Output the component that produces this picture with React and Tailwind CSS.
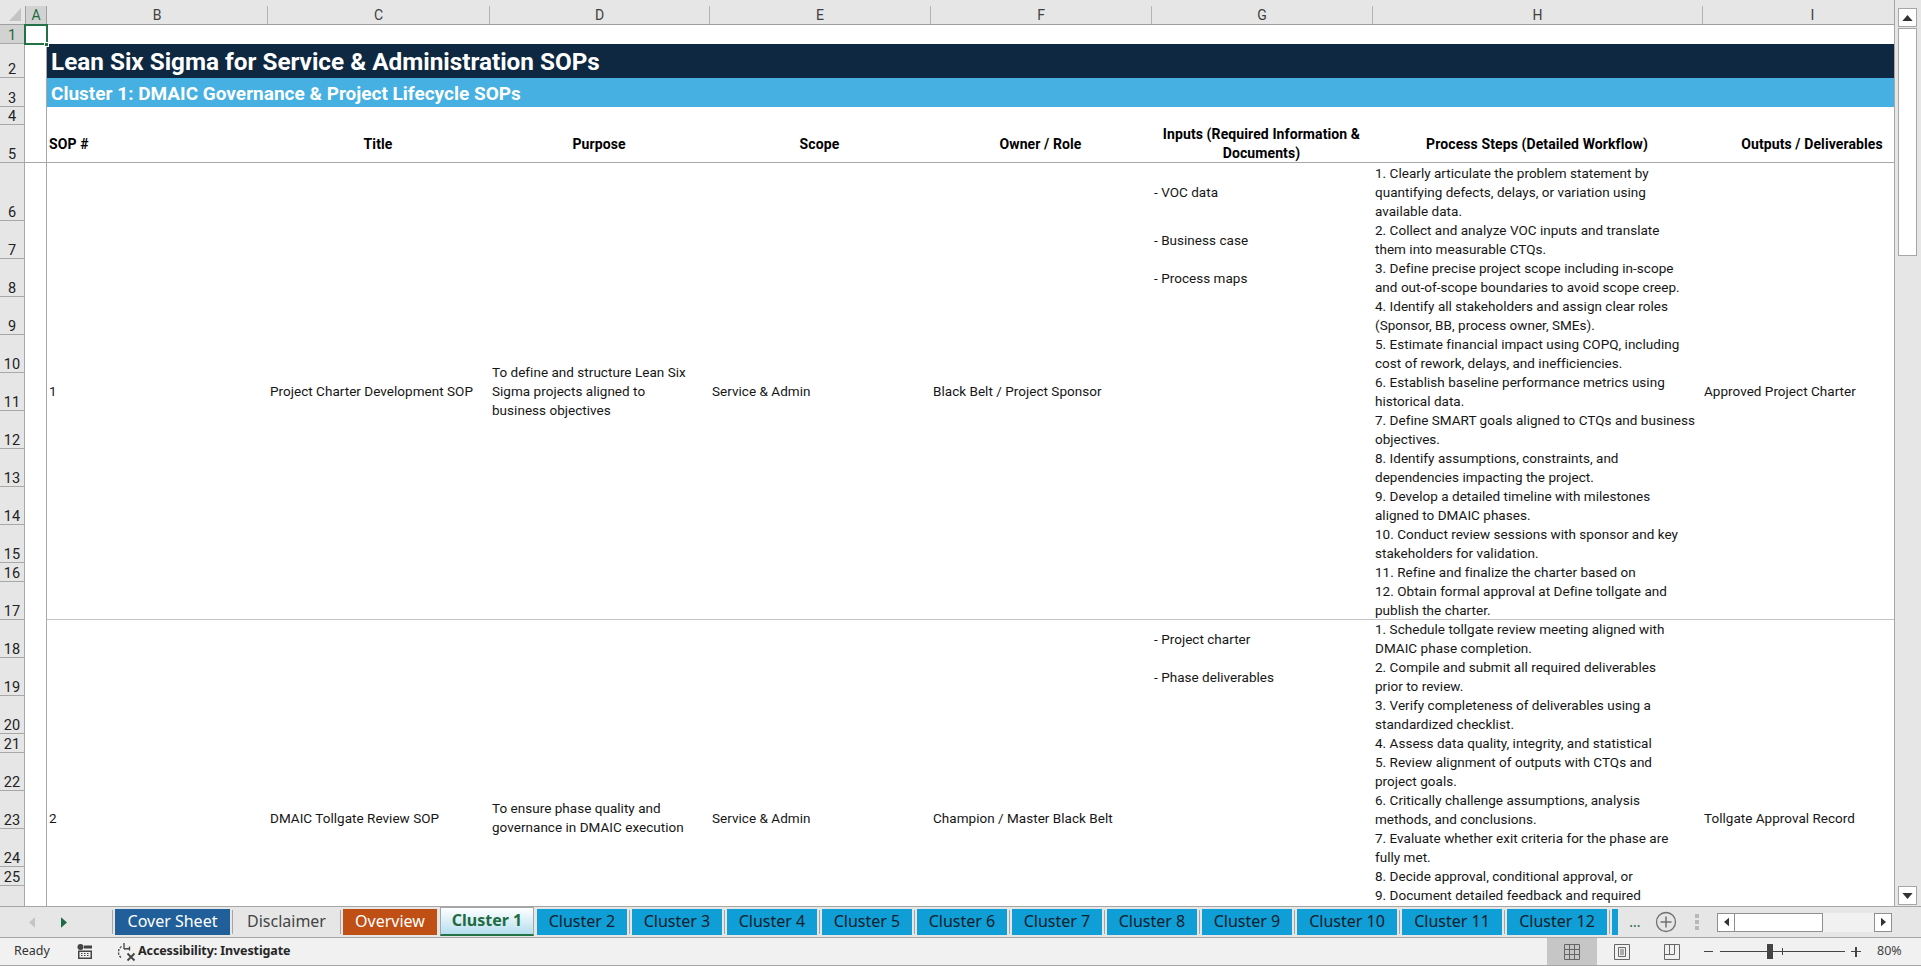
const cellFont = "font-['Roboto',sans-serif]";

const columns = [
  { name: "B", w: "w-[221px]" },
  { name: "C", w: "w-[222px]" },
  { name: "D", w: "w-[220px]" },
  { name: "E", w: "w-[221px]" },
  { name: "F", w: "w-[221px]" },
  { name: "G", w: "w-[221px]" },
  { name: "H", w: "w-[330px]" },
  { name: "I", w: "w-[220px]" },
];

const rowHeads = [
  { n: 1, h: "h-[19px]", active: true },
  { n: 2, h: "h-[34px]" },
  { n: 3, h: "h-[29px]" },
  { n: 4, h: "h-[18px]" },
  { n: 5, h: "h-[38px]" },
  { n: 6, h: "h-[58px]" },
  { n: 7, h: "h-[38px]" },
  { n: 8, h: "h-[38px]" },
  { n: 9, h: "h-[38px]" },
  { n: 10, h: "h-[38px]" },
  { n: 11, h: "h-[38px]" },
  { n: 12, h: "h-[38px]" },
  { n: 13, h: "h-[38px]" },
  { n: 14, h: "h-[38px]" },
  { n: 15, h: "h-[38px]" },
  { n: 16, h: "h-[19px]" },
  { n: 17, h: "h-[38px]" },
  { n: 18, h: "h-[38px]" },
  { n: 19, h: "h-[38px]" },
  { n: 20, h: "h-[38px]" },
  { n: 21, h: "h-[19px]" },
  { n: 22, h: "h-[38px]" },
  { n: 23, h: "h-[38px]" },
  { n: 24, h: "h-[38px]" },
  { n: 25, h: "h-[19px]" },
  { n: "", h: "h-[38px]" },
];

const sops = [
  {
    id: "1",
    title: "Project Charter Development SOP",
    purpose: "To define and structure Lean Six\nSigma projects aligned to\nbusiness objectives",
    scope: "Service & Admin",
    owner: "Black Belt / Project Sponsor",
    output: "Approved Project Charter",
    border: "border-b border-[#c4c4c4]",
    rows: [
      ["- VOC data", "1. Clearly articulate the problem statement by\nquantifying defects, delays, or variation using\navailable data.", "h-[58px]"],
      ["- Business case", "2. Collect and analyze VOC inputs and translate\nthem into measurable CTQs.", "h-[38px]"],
      ["- Process maps", "3. Define precise project scope including in-scope\nand out-of-scope boundaries to avoid scope creep.", "h-[38px]"],
      ["", "4. Identify all stakeholders and assign clear roles\n(Sponsor, BB, process owner, SMEs).", "h-[38px]"],
      ["", "5. Estimate financial impact using COPQ, including\ncost of rework, delays, and inefficiencies.", "h-[38px]"],
      ["", "6. Establish baseline performance metrics using\nhistorical data.", "h-[38px]"],
      ["", "7. Define SMART goals aligned to CTQs and business\nobjectives.", "h-[38px]"],
      ["", "8. Identify assumptions, constraints, and\ndependencies impacting the project.", "h-[38px]"],
      ["", "9. Develop a detailed timeline with milestones\naligned to DMAIC phases.", "h-[38px]"],
      ["", "10. Conduct review sessions with sponsor and key\nstakeholders for validation.", "h-[38px]"],
      ["", "11. Refine and finalize the charter based on", "h-[19px]"],
      ["", "12. Obtain formal approval at Define tollgate and\npublish the charter.", "h-[38px]"],
    ],
  },
  {
    id: "2",
    title: "DMAIC Tollgate Review SOP",
    purpose: "To ensure phase quality and\ngovernance in DMAIC execution",
    scope: "Service & Admin",
    owner: "Champion / Master Black Belt",
    output: "Tollgate Approval Record",
    border: "",
    rows: [
      ["- Project charter", "1. Schedule tollgate review meeting aligned with\nDMAIC phase completion.", "h-[38px]"],
      ["- Phase deliverables", "2. Compile and submit all required deliverables\nprior to review.", "h-[38px]"],
      ["", "3. Verify completeness of deliverables using a\nstandardized checklist.", "h-[38px]"],
      ["", "4. Assess data quality, integrity, and statistical", "h-[19px]"],
      ["", "5. Review alignment of outputs with CTQs and\nproject goals.", "h-[38px]"],
      ["", "6. Critically challenge assumptions, analysis\nmethods, and conclusions.", "h-[38px]"],
      ["", "7. Evaluate whether exit criteria for the phase are\nfully met.", "h-[38px]"],
      ["", "8. Decide approval, conditional approval, or", "h-[19px]"],
      ["", "9. Document detailed feedback and required\n\u00a0", "h-[38px]"],
      ["", "", "h-[92px]"],
    ],
  },
];

const tabs = [
  { label: "Cover Sheet", cls: "w-[115px] h-[26px] bg-[#215f9a] text-white" },
  { label: "Disclaimer", cls: "w-[103px] h-[26px] text-[#444444]" },
  { label: "Overview", cls: "w-[94px] h-[26px] bg-[#bf4f14] text-white" },
  {
    label: "Cluster 1",
    cls: "w-[94px] h-[29px] self-start border-x border-t border-[#a6a6a6] border-b-2 border-b-[#217346] bg-gradient-to-b from-white to-[#b5deef] font-bold text-[#1e6b41]",
  },
  { label: "Cluster 2", cls: "w-[90px] h-[26px] bg-[#0f9ed5] text-[#10202c]" },
  { label: "Cluster 3", cls: "w-[90px] h-[26px] bg-[#0f9ed5] text-[#10202c]" },
  { label: "Cluster 4", cls: "w-[90px] h-[26px] bg-[#0f9ed5] text-[#10202c]" },
  { label: "Cluster 5", cls: "w-[90px] h-[26px] bg-[#0f9ed5] text-[#10202c]" },
  { label: "Cluster 6", cls: "w-[90px] h-[26px] bg-[#0f9ed5] text-[#10202c]" },
  { label: "Cluster 7", cls: "w-[90px] h-[26px] bg-[#0f9ed5] text-[#10202c]" },
  { label: "Cluster 8", cls: "w-[90px] h-[26px] bg-[#0f9ed5] text-[#10202c]" },
  { label: "Cluster 9", cls: "w-[90px] h-[26px] bg-[#0f9ed5] text-[#10202c]" },
  { label: "Cluster 10", cls: "w-[100px] h-[26px] bg-[#0f9ed5] text-[#10202c]" },
  { label: "Cluster 11", cls: "w-[100px] h-[26px] bg-[#0f9ed5] text-[#10202c]" },
  { label: "Cluster 12", cls: "w-[100px] h-[26px] bg-[#0f9ed5] text-[#10202c]" },
  { label: "", cls: "w-[6px] h-[26px] bg-[#0f9ed5]" },
];

function Triangle({ dir, className }) {
  const points = {
    up: "0,7 12,7 6,0",
    down: "0,0 12,0 6,7",
    left: "7,0 7,12 0,6",
    right: "0,0 0,12 7,6",
  };
  const box = dir === "up" || dir === "down" ? "0 0 12 7" : "0 0 7 12";
  return (
    <svg viewBox={box} className={className} fill="currentColor">
      <polygon points={points[dir]} />
    </svg>
  );
}

function ColumnHeaders() {
  return (
    <div className={`flex h-[25px] shrink-0 pt-[6px] text-[14px] text-[#3f3f3f] ${cellFont}`}>
      <div className="flex w-[25px] shrink-0 items-end justify-end border-b border-[#9f9f9f] pb-[3px] pr-[4px]">
        <svg viewBox="0 0 12 13" className="h-[13px] w-[12px]">
          <polygon points="12,0 12,13 0,13" fill="#c4c4c4" />
        </svg>
      </div>
      <div className="flex w-[22px] shrink-0 items-center justify-center border-x border-b border-[#9f9f9f] bg-[#d2d2d2] text-[#1e6b41]">
        A
      </div>
      <div className="flex min-w-0 flex-1 overflow-hidden border-b border-[#9f9f9f]">
        {columns.map((col) => (
          <div
            key={col.name}
            className={`flex shrink-0 items-center justify-center border-r border-[#b4b4b4] ${col.w}`}
          >
            {col.name}
          </div>
        ))}
      </div>
    </div>
  );
}

function RowHeaders() {
  return (
    <div className={`flex shrink-0 flex-col text-[14.5px] text-[#222222] ${cellFont}`}>
      {rowHeads.map((row, i) => (
        <div key={i} className={`flex shrink-0 ${row.h}`}>
          <div
            className={`flex w-[25px] items-end justify-center border-r border-b border-[#a8a8a8] leading-[15px] ${
              row.active ? "bg-[#d2d2d2] text-[#1e6b41]" : "bg-[#e6e6e6]"
            }`}
          >
            {row.n}
          </div>
          <div
            className={`w-[22px] border-r border-[#a8a8a8] bg-white ${
              row.n === 5 ? "border-b" : ""
            }`}
          />
        </div>
      ))}
    </div>
  );
}

function SopBlock({ sop }) {
  const span = sop.rows.length === 12 ? "row-span-12" : "row-span-10";
  const merged = `${span} flex items-center whitespace-pre-line px-[2px] ${sop.border}`;
  return (
    <div className="grid grid-cols-[221px_222px_220px_221px_221px_221px_329px_220px]">
      <div className={merged}>{sop.id}</div>
      <div className={merged}>{sop.title}</div>
      <div className={merged}>{sop.purpose}</div>
      <div className={merged}>{sop.scope}</div>
      <div className={merged}>{sop.owner}</div>
      {sop.rows.map(([input, step, height], i) => (
        <Row
          key={i}
          input={input}
          step={step}
          height={height}
          first={i === 0}
          last={i === sop.rows.length - 1 && sop.rows.length === 12}
          sop={sop}
          merged={merged}
        />
      ))}
    </div>
  );
}

function Row({ input, step, height, first, last, sop, merged }) {
  const edge = last ? "border-b border-[#c4c4c4]" : "";
  return (
    <>
      <div className={`flex items-center px-[2px] ${edge}`}>{input}</div>
      <div className={`flex items-center whitespace-pre-line px-[2px] ${height} ${edge}`}>
        {step}
      </div>
      {first && <div className={merged}>{sop.output}</div>}
    </>
  );
}

function Sheet() {
  return (
    <div className={`min-w-0 flex-1 overflow-hidden bg-white text-[13.5px] leading-[19px] tracking-[0.03px] text-[#161616] ${cellFont}`}>
      <div className="h-[19px]" />
      <div className="flex h-[34px] items-center bg-[#0e2841] pt-[1px] pl-[4px] text-[24.3px] font-bold tracking-normal text-white">
        Lean Six Sigma for Service &amp; Administration SOPs
      </div>
      <div className="flex h-[29px] items-center bg-[#45b0e1] pt-[2px] pl-[4px] text-[19px] font-bold tracking-normal text-white">
        Cluster 1: DMAIC Governance &amp; Project Lifecycle SOPs
      </div>
      <div className="h-[18px]" />
      <div className="grid h-[38px] grid-cols-[220px_222px_220px_221px_221px_221px_330px_220px] items-center border-b border-[#a8a8a8] text-[14px] font-bold tracking-[0.1px] text-black">
        <div className="pl-[2px]">SOP #</div>
        <div className="text-center">Title</div>
        <div className="text-center">Purpose</div>
        <div className="text-center">Scope</div>
        <div className="text-center">Owner / Role</div>
        <div className="text-center">
          Inputs (Required Information &amp;
          <br />
          Documents)
        </div>
        <div className="text-center">Process Steps (Detailed Workflow)</div>
        <div className="text-center">Outputs / Deliverables</div>
      </div>
      {sops.map((sop) => (
        <SopBlock key={sop.id} sop={sop} />
      ))}
    </div>
  );
}

function VerticalScroll() {
  return (
    <div className="flex w-[26px] shrink-0 flex-col items-start bg-[#e6e6e6] pt-[8px] pl-[3px] text-[#333333]">
      <div className="flex h-[19px] w-[19px] shrink-0 items-center justify-center border border-[#a6a6a6] bg-white">
        <Triangle dir="up" className="h-[6px] w-[11px]" />
      </div>
      <div className="mt-px h-[228px] w-[19px] shrink-0 border border-[#a6a6a6] bg-white" />
      <div className="flex-1" />
      <div className="flex h-[19px] w-[19px] shrink-0 items-center justify-center border border-[#a6a6a6] bg-white">
        <Triangle dir="down" className="h-[6px] w-[11px]" />
      </div>
      <div className="h-px" />
    </div>
  );
}

function TabBar() {
  return (
    <div className="flex h-[32px] shrink-0 items-center border-y border-y-[#a6a6a6] bg-[#e6e6e6] font-['Noto_Sans',sans-serif] text-[16px]">
      <div className="flex w-[112px] shrink-0 items-center pl-[29px]">
        <Triangle dir="left" className="h-[11px] w-[6px] text-[#c4c4c4]" />
        <Triangle dir="right" className="ml-[26px] h-[11px] w-[6px] text-[#1e6b41]" />
      </div>
      <div className="flex h-[30px] shrink-0 items-center">
        <div className="mr-[2px] h-[24px] w-px bg-[#a6a6a6]" />
        {tabs.map((tab, i) => (
          <div key={i} className="flex h-full items-center">
            {i > 0 && tab.label !== "Cluster 1" && tabs[i - 1].label !== "Cluster 1" && (
              <div className="mx-[2px] h-[24px] w-px bg-[#a6a6a6]" />
            )}
            {(tab.label === "Cluster 1" || tabs[i - 1]?.label === "Cluster 1") && <div className="w-[3px]" />}
            <div className={`flex items-center justify-center pb-[2px] ${tab.cls}`}>
              {tab.label}
            </div>
          </div>
        ))}
      </div>
      <div className="ml-[10px] w-[14px] text-center text-[14px] leading-[10px] text-[#1e6b41]">...</div>
      <svg viewBox="0 0 22 22" className="ml-[13px] h-[22px] w-[22px] shrink-0 text-[#707070]" fill="none" stroke="currentColor">
        <circle cx="11" cy="11" r="9.5" strokeWidth="1.3" />
        <path d="M11 5.5v11M5.5 11h11" strokeWidth="1.5" />
      </svg>
      <div className="ml-[18px] flex w-[4px] shrink-0 flex-col gap-[2px]">
        <div className="h-[4px] bg-[#b8b8b8]" />
        <div className="h-[4px] bg-[#b8b8b8]" />
        <div className="h-[4px] bg-[#b8b8b8]" />
      </div>
      <div className="ml-[18px] flex h-[19px] w-[175px] shrink-0 items-center bg-[#f1f1f1] text-[#333333]">
        <div className="flex h-[19px] w-[18px] items-center justify-center border border-[#8f8f8f] bg-white">
          <Triangle dir="left" className="h-[10px] w-[5px]" />
        </div>
        <div className="h-[19px] w-[88px] border-y border-r border-[#8f8f8f] bg-white" />
        <div className="flex-1" />
        <div className="flex h-[19px] w-[18px] items-center justify-center border border-[#8f8f8f] bg-white">
          <Triangle dir="right" className="h-[10px] w-[5px]" />
        </div>
      </div>
    </div>
  );
}

function StatusBar() {
  return (
    <div className="flex h-[28px] shrink-0 items-center border-b border-[#a6a6a6] bg-[#f1f1f1] font-['Noto_Sans',sans-serif] text-[12.5px] text-[#333333]">
      <span className="ml-[14px] w-[63px]">Ready</span>
      <svg viewBox="0 0 15 15" className="h-[15px] w-[15px] text-[#444444]" fill="currentColor">
        <circle cx="3.5" cy="3" r="3" />
        <path d="M7 1.5h8v3H7zM1 6.5h14v8.5H1zm1.5 1.500v5.500h11V8z" fillRule="evenodd" />
        <path d="M4 9h1.500v1H4zM7 9h1.500v1H7zM10 9h1.500v1H10zM4 11h1.500v1H4zM7 11h1.500v1H7zM10 11h1.500v1H10z" />
      </svg>
      <svg viewBox="0 0 20 20" className="ml-[24px] h-[20px] w-[20px] text-[#444444]" fill="none" stroke="currentColor" strokeWidth="1.3">
        <path d="M5.500 4.500a7 7 0 0 0 0 11.500" strokeDasharray="2.200 1.300" />
        <path d="M8 1v6M8 7l5.500-.5M13.500 4.500v4" />
        <path d="M11.500 11.500l7 7M18.500 11.500l-7 7" strokeWidth="1.800" />
      </svg>
      <span className="ml-[2px] font-bold tracking-[-0.1px] text-[#262626]">Accessibility: Investigate</span>
      <div className="flex-1" />
      <div className="flex h-full w-[50px] items-center justify-center bg-[#c6c6c6]">
        <svg viewBox="0 0 16 16" className="h-[16px] w-[16px] text-[#666666]" fill="none" stroke="currentColor">
          <path d="M.5.5h15v15H.5zM5.500.5v15M10.500.5v15M.5 5.500h15M.5 10.500h15" />
        </svg>
      </div>
      <div className="flex w-[50px] justify-center">
        <svg viewBox="0 0 16 16" className="h-[16px] w-[16px] text-[#666666]" fill="none" stroke="currentColor">
          <path d="M.5.5h15v15H.5zM4.500 3.500h7v9h-7zM6 6h4M6 8h4M6 10h4" />
        </svg>
      </div>
      <div className="flex w-[50px] justify-center">
        <svg viewBox="0 0 16 16" className="h-[16px] w-[16px] text-[#666666]" fill="none" stroke="currentColor">
          <path d="M.5.5h15v15H.5zM.5 10.500h10M5.500.5v10M10.500.5v10" />
        </svg>
      </div>
      <span className="ml-[7px] h-[1.500px] w-[9px] bg-[#444444]" />
      <div className="relative ml-[7px] h-px w-[125px] bg-[#444444]">
        <div className="absolute -top-[7px] left-[47px] h-[15px] w-[6px] bg-[#444444]" />
        <div className="absolute -top-[3px] left-[62px] h-[7px] w-px bg-[#444444]" />
      </div>
      <span className="relative ml-[6px] h-[10px] w-[10px]">
        <span className="absolute top-[4px] left-0 h-[1.500px] w-[10px] bg-[#444444]" />
        <span className="absolute top-0 left-[4px] h-[10px] w-[1.500px] bg-[#444444]" />
      </span>
      <span className="ml-[16px] mr-[14px] w-[30px] text-[#444444]">80%</span>
    </div>
  );
}

export default function App() {
  return (
    <div className="relative flex h-screen w-full flex-col overflow-hidden bg-[#e6e6e6]">
      <div className="flex min-h-0 flex-1">
        <div className="flex min-w-0 flex-1 flex-col border-r border-[#a6a6a6]">
          <ColumnHeaders />
          <div className="flex min-h-0 flex-1 overflow-hidden">
            <RowHeaders />
            <Sheet />
          </div>
        </div>
        <VerticalScroll />
      </div>
      <TabBar />
      <StatusBar />
      {/* selected cell A1 */}
      <div className="absolute top-[24px] left-[24px] h-[21px] w-[24px] border-2 border-[#217346]" />
      <div className="absolute top-[42px] left-[44px] h-[5px] w-[5px] border border-white bg-[#217346]" />
    </div>
  );
}
